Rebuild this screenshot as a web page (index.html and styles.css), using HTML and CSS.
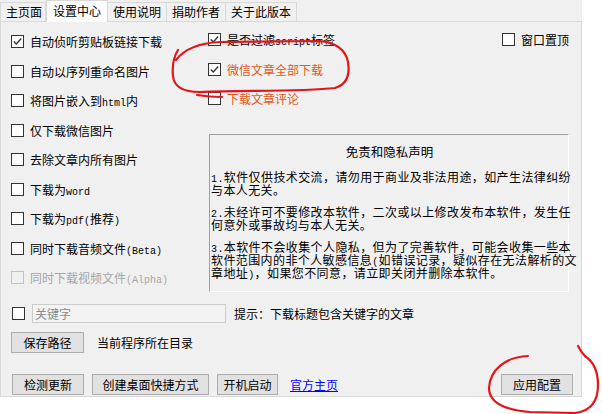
FILE: index.html
```html
<!DOCTYPE html>
<html lang="zh-CN">
<head>
<meta charset="utf-8">
<title>设置中心</title>
<link rel="stylesheet" href="styles.css">
</head>
<body>
<div class="window">
  <div class="tabs">
    <div class="tab first">主页面</div>
    <div class="tab active">设置中心</div>
    <div class="tab">使用说明</div>
    <div class="tab">捐助作者</div>
    <div class="tab">关于此版本</div>
  </div>
  <div class="panel">
    <div class="main">
      <div class="col-left">
        <label class="row"><span class="box"><svg viewBox="0 0 11 11" width="11" height="11"><path d="M1.8 5.4 L4.3 7.9 L9.2 2.6" /></svg></span><span class="lbl">自动侦听剪贴板链接下载</span></label>
        <label class="row"><span class="box"></span><span class="lbl">自动以序列重命名图片</span></label>
        <label class="row"><span class="box"></span><span class="lbl">将图片嵌入到<span class="mono">html</span>内</span></label>
        <label class="row"><span class="box"></span><span class="lbl">仅下载微信图片</span></label>
        <label class="row"><span class="box"></span><span class="lbl">去除文章内所有图片</span></label>
        <label class="row"><span class="box"></span><span class="lbl">下载为<span class="mono">word</span></span></label>
        <label class="row"><span class="box"></span><span class="lbl">下载为<span class="mono">pdf(</span>推荐<span class="mono">)</span></span></label>
        <label class="row"><span class="box"></span><span class="lbl">同时下载音频文件<span class="mono">(Beta)</span></span></label>
        <label class="row disabled"><span class="box"></span><span class="lbl">同时下载视频文件<span class="mono">(Alpha)</span></span></label>
      </div>
      <div class="col-right">
        <div class="top-options">
          <div class="col-mid">
            <label class="row"><span class="box"><svg viewBox="0 0 11 11" width="11" height="11"><path d="M1.8 5.4 L4.3 7.9 L9.2 2.6" /></svg></span><span class="lbl">是否过滤<span class="mono">script</span>标签</span></label>
            <label class="row orange"><span class="box"><svg viewBox="0 0 11 11" width="11" height="11"><path d="M1.8 5.4 L4.3 7.9 L9.2 2.6" /></svg></span><span class="lbl">微信文章全部下载</span></label>
            <label class="row orange"><span class="box"></span><span class="lbl">下载文章评论</span></label>
          </div>
          <div class="col-far">
            <label class="row"><span class="box"></span><span class="lbl">窗口置顶</span></label>
          </div>
        </div>
        <div class="disclaimer">
          <div class="d-title">免责和隐私声明</div>
          <p class="d-para"><span class="mono12">1.</span>软件仅供技术交流，请勿用于商业及非法用途，如产生法律纠纷<br>与本人无关。</p>
          <p class="d-para"><span class="mono12">2.</span>未经许可不要修改本软件，二次或以上修改发布本软件，发生任<br>何意外或事故均与本人无关。</p>
          <p class="d-para"><span class="mono12">3.</span>本软件不会收集个人隐私，但为了完善软件，可能会收集一些本<br>软件范围内的非个人敏感信息<span class="mono12">(</span>如错误记录，疑似存在无法解析的文<br>章地址<span class="mono12">)</span>，如果您不同意，请立即关闭并删除本软件。</p>
        </div>
      </div>
    </div>
    <div class="keyword-row">
      <span class="box kw-box"></span>
      <div class="textbox">关键字</div>
      <span class="hint">提示：下载标题包含关键字的文章</span>
    </div>
    <div class="save-row">
      <button class="btn save-btn">保存路径</button>
      <span class="path">当前程序所在目录</span>
    </div>
    <div class="bottom-row">
      <button class="btn w72">检测更新</button>
      <button class="btn w117">创建桌面快捷方式</button>
      <button class="btn w61">开机启动</button>
      <a class="link" href="#">官方主页</a>
      <button class="btn apply">应用配置</button>
    </div>
  </div>
</div>
<svg class="marks" width="602" height="414" viewBox="0 0 602 414">
  <path d="M176 60 C185 48 200 43 220 42 L320 41 C335 42 346 50 348 62 C350 74 348 84 335 88 C300 92 240 90 200 92 C185 92 174 88 173 76 C172 66 173 58 178 50" />
  <path d="M197 95 Q210 97 222 97" />
  <path d="M528 356 C505 357 490 370 489 388 C489 403 505 410 530 412 L575 413 C592 411 598 400 598 385 C598 372 594 362 585 356 C582 353 580 350 578 346" />
</svg>
</body>
</html>
```

FILE: styles.css
```css
* {
  box-sizing: border-box;
}

html,
body {
  height: 414px;
}

body {
  margin: 0;
  position: relative;
  overflow: hidden;
  background: #ffffff;
  font-family: "Noto Sans CJK SC", sans-serif;
  font-size: 12px;
  color: #000000;
}

.window {
  width: 582px;
  height: 397px;
  background: #f0f0f0;
}

/* ---------- tabs ---------- */
.tabs {
  display: flex;
  align-items: flex-end;
  height: 21px;
}

.tab {
  height: 19px;
  line-height: 17px;
  padding: 0 5px;
  border-top: 1px solid #d9d9d9;
  border-right: 1px solid #d9d9d9;
  background: #f0f0f0;
  white-space: nowrap;
}

.tab.first {
  width: 46px;
  border-left: 1px solid #d9d9d9;
}

.tab.active {
  position: relative;
  z-index: 1;
  height: 22px;
  margin-bottom: -1px;
  line-height: 19px;
  padding: 0 6px;
  border-left: 1px solid #d9d9d9;
  background: #fcfcfc;
}

/* ---------- panel ---------- */
.panel {
  height: 376px;
  border: 1px solid #d9d9d9;
  padding: 5px 0 0 10px;
}

.main {
  display: flex;
}

.col-left {
  width: 197px;
  display: flex;
  flex-direction: column;
}

.col-right {
  width: 361px;
  margin-top: -2px;
}

.top-options {
  display: flex;
}

.col-mid {
  width: 294px;
  display: flex;
  flex-direction: column;
}

.col-far {
  display: flex;
  flex-direction: column;
}

.row {
  height: 29.5px;
  display: flex;
  align-items: center;
  gap: 6px;
  white-space: nowrap;
}

.box {
  width: 13px;
  height: 13px;
  flex: none;
  border: 1px solid #333333;
  background: #ffffff;
  display: flex;
  align-items: center;
  justify-content: center;
}

.box svg path {
  fill: none;
  stroke: #333333;
  stroke-width: 1.4;
}

.mono {
  font-family: "Liberation Mono", monospace;
  font-size: 10px;
}

.mono12 {
  font-family: "Liberation Mono", monospace;
  font-size: 10px;
  line-height: 0;
}

.orange {
  color: #e2571e;
}

.disabled {
  color: #a6a6a6;
}

.disabled .box {
  border-color: #c2c2c2;
  background: transparent;
}

/* ---------- disclaimer ---------- */
.disclaimer {
  margin-top: 20px;
  margin-left: 1px;
  width: 360px;
  height: 158px;
  border-top: 1px solid #a0a0a0;
  border-left: 1px solid #a0a0a0;
  border-right: 1px solid #ffffff;
  border-bottom: 1px solid #ffffff;
  padding: 9px 0 0 1px;
}

.d-title {
  text-align: center;
  line-height: 16px;
  font-size: 12.5px;
  margin-bottom: 10px;
}

.d-para {
  margin: 0 0 9px 0;
  line-height: 13px;
  letter-spacing: 0.4px;
  white-space: nowrap;
}

/* ---------- lower rows ---------- */
.keyword-row {
  margin-top: 11px;
  height: 19px;
  display: flex;
  align-items: center;
}

.kw-box {
  margin-left: 1px;
}

.textbox {
  margin-left: 7px;
  width: 194px;
  height: 19px;
  border: 1px solid #cccccc;
  background: #f3f3f3;
  color: #8a8a8a;
  line-height: 17px;
  padding-left: 2px;
}

.hint {
  margin-left: 8px;
}

.save-row {
  margin-top: 9px;
  display: flex;
  align-items: center;
}

.btn {
  height: 21px;
  padding: 0;
  border: 1px solid #adadad;
  background: #e1e1e1;
  font-family: "Noto Sans CJK SC", sans-serif;
  font-size: 12px;
  color: #000000;
  line-height: 19px;
}

.save-btn {
  width: 73px;
}

.path {
  margin-left: 13px;
}

.bottom-row {
  margin-top: 21px;
  display: flex;
  align-items: center;
  gap: 8px;
  padding-right: 8px;
}

.w72 {
  width: 72px;
  margin-left: 1px;
}

.w117 {
  width: 117px;
}

.w61 {
  width: 61px;
}

.link {
  margin-left: 4px;
  color: #0000ff;
  text-decoration: underline;
}

.apply {
  width: 72px;
  margin-left: auto;
}

/* ---------- red annotations ---------- */
.marks {
  position: absolute;
  top: 0;
  left: 0;
  pointer-events: none;
}

.marks path {
  fill: none;
  stroke: #e4141b;
  stroke-width: 2.2;
  stroke-linecap: round;
  stroke-linejoin: round;
}
```
